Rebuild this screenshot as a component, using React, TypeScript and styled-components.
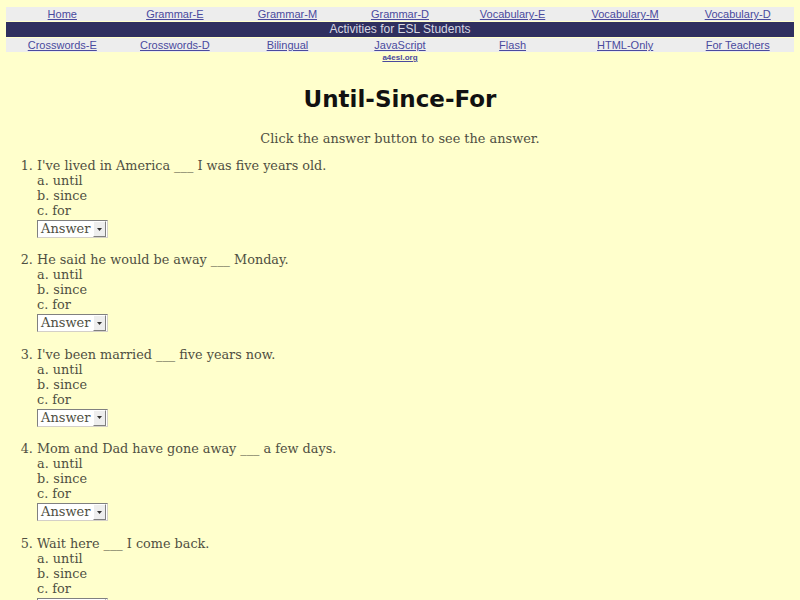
import * as React from 'react';
import styled, { createGlobalStyle } from 'styled-components';

const GlobalStyle = createGlobalStyle`
  html, body {
    margin: 0;
    padding: 0;
    background: #ffffcc;
  }
  body {
    padding: 7px 6px;
    font-family: "DejaVu Serif", serif;
    color: #4f4f42;
  }
`;

const NavTable = styled.div`
  display: flex;
  flex-direction: column;
  gap: 1px;
`;

const NavRow = styled.div`
  display: grid;
  grid-template-columns: repeat(7, 1fr);
  background: #ededed;
  height: 14px;
  align-items: center;
`;

const NavCell = styled.div`
  display: flex;
  flex-direction: column;
  align-items: center;
  position: relative;
`;

const NavLink = styled.a`
  font-family: "Liberation Sans", Arial, sans-serif;
  font-size: 11px;
  line-height: 14px;
  color: #4a4a9e;
  text-decoration: underline;
`;

const SubLink = styled.a`
  position: absolute;
  top: 15px;
  font-family: "Liberation Sans", Arial, sans-serif;
  font-size: 8px;
  font-weight: bold;
  color: #4a4a9e;
  text-decoration: underline;
`;

const Banner = styled.div`
  background: #2f2f5f;
  color: #d8d8e2;
  font-family: "Liberation Sans", Arial, sans-serif;
  font-size: 12px;
  line-height: 15px;
  text-align: center;
`;

const Title = styled.h1`
  margin: 32px 0 0;
  text-align: center;
  font-family: "Comic Sans MS", "DejaVu Sans", sans-serif;
  font-size: 23px;
  line-height: 30px;
  font-weight: bold;
  color: #111111;
`;

const Intro = styled.p`
  margin: 17px 0 0;
  text-align: center;
  font-size: 12.9px;
  line-height: 15px;
`;

const QuizList = styled.ol`
  margin: 12px 0 0;
  padding-left: 31px;
  font-size: 12.8px;
  line-height: 15px;
`;

const Question = styled.li`
  margin-bottom: 14.4px;
`;

const Choices = styled.div`
  display: flex;
  flex-direction: column;
`;

const SelectBox = styled.span`
  display: inline-flex;
  align-items: center;
  margin-top: 2px;
  height: 16px;
  padding: 0 1px 0 3px;
  background: #ffffff;
  border: 1px solid;
  border-color: #808080 #d4d0c8 #d4d0c8 #808080;
  font-size: 13px;
  line-height: 16px;
  color: #4f4f42;
`;

const ArrowBox = styled.span`
  display: inline-flex;
  align-items: center;
  justify-content: center;
  width: 11px;
  height: 14px;
  margin-left: 3px;
  background: #eeeeee;
  border: 1px solid;
  border-color: #ffffff #808080 #808080 #ffffff;
`;

const topLinks = ['Home', 'Grammar-E', 'Grammar-M', 'Grammar-D', 'Vocabulary-E', 'Vocabulary-M', 'Vocabulary-D'];
const bottomLinks = ['Crosswords-E', 'Crosswords-D', 'Bilingual', 'JavaScript', 'Flash', 'HTML-Only', 'For Teachers'];

const questions = [
  "I've lived in America ___ I was five years old.",
  'He said he would be away ___ Monday.',
  "I've been married ___ five years now.",
  'Mom and Dad have gone away ___ a few days.',
  'Wait here ___ I come back.',
];

const AnswerSelect: React.FC = () => (
  <SelectBox>
    Answer
    <ArrowBox>
      <svg width="5" height="3" viewBox="0 0 5 3">
        <path d="M0 0h5L2.5 3z" fill="#333" />
      </svg>
    </ArrowBox>
  </SelectBox>
);

const App: React.FC = () => {
  return (
    <>
      <GlobalStyle />
      <NavTable>
        <NavRow>
          {topLinks.map((l) => (
            <NavCell key={l}>
              <NavLink href="#">{l}</NavLink>
            </NavCell>
          ))}
        </NavRow>
        <Banner>Activities for ESL Students</Banner>
        <NavRow>
          {bottomLinks.map((l) => (
            <NavCell key={l}>
              <NavLink href="#">{l}</NavLink>
              {l === 'JavaScript' && <SubLink href="#">a4esl.org</SubLink>}
            </NavCell>
          ))}
        </NavRow>
      </NavTable>

      <Title>Until-Since-For</Title>
      <Intro>Click the answer button to see the answer.</Intro>

      <QuizList>
        {questions.map((q) => (
          <Question key={q}>
            {q}
            <Choices>
              <span>a. until</span>
              <span>b. since</span>
              <span>c. for</span>
            </Choices>
            <AnswerSelect />
          </Question>
        ))}
      </QuizList>
    </>
  );
};

export default App;
